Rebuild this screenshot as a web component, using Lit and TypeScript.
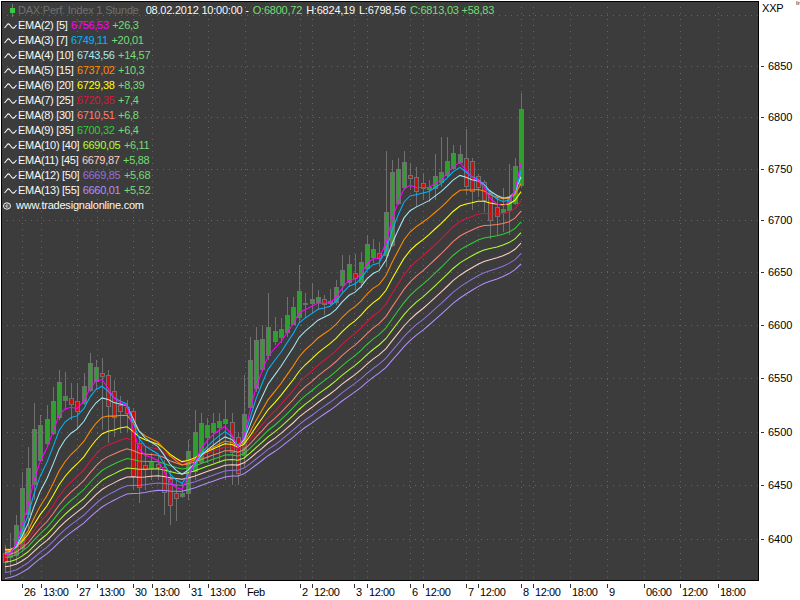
import { LitElement, html, css, svg } from "lit";
import { customElement } from "lit/decorators.js";

type C = [number, number, number, number, number, "g" | "r"];
const candles: C[] = [
  [5,553,562,545,573,"r"],[10,550,557,533,575,"g"],[16,525,555,515,563,"g"],[22,488,548,472,552,"g"],
  [28,468,514,447,530,"g"],[34,429,484,403,500,"g"],[40,425,460,415,462,"g"],[47,419,443,405,447,"g"],
  [53,401,433,387,435,"g"],[59,382,417,370,420,"g"],[65,396,400,372,410,"g"],[71,398,404,383,420,"r"],
  [77,401,411,383,428,"r"],[84,386,403,373,405,"g"],[90,363,390,353,392,"g"],[96,367,381,360,390,"g"],
  [102,373,376,358,430,"r"],[108,375,406,370,443,"r"],[114,391,417,380,437,"r"],[120,405,411,396,433,"r"],
  [127,407,413,400,432,"r"],[133,411,476,408,490,"r"],[139,443,487,437,503,"r"],[145,465,469,447,490,"r"],
  [151,461,468,453,480,"g"],[158,464,467,455,480,"r"],[164,467,492,460,515,"r"],[170,479,505,470,525,"r"],
  [176,493,498,480,521,"r"],[182,493,496,483,498,"g"],[188,451,493,440,500,"g"],[195,432,471,410,480,"g"],
  [201,423,462,413,463,"g"],[207,425,437,418,463,"g"],[213,423,432,413,463,"g"],[219,421,427,413,463,"g"],
  [225,419,423,400,480,"g"],[232,422,452,413,485,"r"],[238,437,473,432,485,"r"],[244,414,455,375,467,"g"],
  [250,360,407,337,410,"g"],[256,340,388,327,392,"g"],[262,339,369,325,372,"g"],[268,327,355,293,360,"g"],
  [275,331,341,317,345,"g"],[281,329,337,318,343,"g"],[287,315,332,297,337,"g"],[293,307,324,297,325,"g"],
  [299,291,317,265,322,"g"],[305,303,304,293,317,"g"],[312,299,303,283,313,"g"],[318,297,302,290,310,"g"],
  [324,299,304,295,315,"r"],[330,301,303,289,305,"g"],[336,287,302,280,305,"g"],[342,270,285,255,292,"g"],
  [349,264,282,255,287,"g"],[355,273,278,254,290,"r"],[361,262,282,252,288,"g"],[367,244,268,235,270,"g"],
  [373,249,257,239,263,"g"],[379,253,258,242,267,"r"],[386,212,255,151,267,"g"],[392,172,245,160,247,"g"],
  [398,169,203,158,205,"g"],[404,162,187,151,190,"g"],[410,175,178,163,190,"r"],[416,177,191,167,207,"r"],
  [423,183,188,173,200,"r"],[429,187,189,180,202,"g"],[435,176,188,154,200,"g"],[441,172,182,137,187,"g"],
  [447,161,175,137,177,"g"],[453,153,168,145,170,"g"],[460,154,162,145,163,"g"],[466,158,186,129,195,"r"],
  [472,161,191,158,210,"r"],[478,176,187,174,197,"r"],[484,182,200,180,212,"r"],[490,193,220,190,239,"r"],
  [497,207,216,195,235,"r"],[503,209,212,188,232,"g"],[509,196,210,164,235,"g"],[515,166,203,158,205,"g"],
  [521,109,185,93,187,"g"],
];

const emas = [
  { name: "EMA(2) [5]", value: "6756,53", delta: "+26,3", period: 5, seed: 552, color: "#ff00ff" },
  { name: "EMA(3) [7]", value: "6749,11", delta: "+20,01", period: 7, seed: 551, color: "#00b4ff" },
  { name: "EMA(4) [10]", value: "6743,56", delta: "+14,57", period: 10, seed: 550, color: "#a8e8f0" },
  { name: "EMA(5) [15]", value: "6737,02", delta: "+10,3", period: 15, seed: 549, color: "#ff8c00" },
  { name: "EMA(6) [20]", value: "6729,38", delta: "+8,39", period: 20, seed: 548, color: "#ffff00" },
  { name: "EMA(7) [25]", value: "6720,35", delta: "+7,4", period: 25, seed: 551, color: "#dc143c" },
  { name: "EMA(8) [30]", value: "6710,51", delta: "+6,8", period: 30, seed: 554, color: "#fa8072" },
  { name: "EMA(9) [35]", value: "6700,32", delta: "+6,4", period: 35, seed: 557, color: "#32cd32" },
  { name: "EMA(10) [40]", value: "6690,05", delta: "+6,11", period: 40, seed: 562, color: "#adff2f" },
  { name: "EMA(11) [45]", value: "6679,87", delta: "+5,88", period: 45, seed: 567, color: "#ffcfc4" },
  { name: "EMA(12) [50]", value: "6669,85", delta: "+5,68", period: 50, seed: 573, color: "#9370db" },
  { name: "EMA(13) [55]", value: "6660,01", delta: "+5,52", period: 55, seed: 579, color: "#b48cff" },
];

const emaPoints = (period: number, seed: number) => {
  const k = 2 / (period + 1);
  let v = seed;
  return candles
    .map((c) => {
      const close = c[5] === "g" ? c[1] : c[2];
      v = v + k * (close - v);
      return `${c[0]},${v.toFixed(1)}`;
    })
    .join(" ");
};

const prices: [string, number][] = [
  ["6850", 66], ["6800", 117], ["6750", 169], ["6700", 220], ["6650", 272],
  ["6600", 325], ["6550", 378], ["6500", 432], ["6450", 485], ["6400", 539],
];
const gridY = [15, ...prices.map((p) => p[1])];
const times: [string, number][] = [
  ["26", 22], ["13:00", 41], ["27", 77], ["13:00", 97], ["30", 133], ["13:00", 152], ["31", 189],
  ["13:00", 208], ["Feb", 245], ["2", 300], ["12:00", 312], ["3", 354], ["12:00", 367], ["6", 410],
  ["12:00", 423], ["7", 466], ["12:00", 478], ["8", 521], ["12:00", 533], ["18:00", 570], ["9", 607],
  ["06:00", 644], ["12:00", 680], ["18:00", 718],
];

@customElement("app-root")
export class AppRoot extends LitElement {
  static styles = css`
    :host {
      display: grid;
      grid-template-columns: 758px 41px;
      grid-template-rows: 580px 19px;
      width: 800px;
      height: 600px;
      box-sizing: border-box;
      padding: 1px 0 0 1px;
      background: #fff;
      overflow: hidden;
      font: 11px/15px "Liberation Sans", Arial, sans-serif;
      color: #000;
    }
    .plot {
      position: relative;
      box-sizing: border-box;
      border: 1px solid #000;
      background: #3c3c3c;
      overflow: hidden;
    }
    .chart { display: block; }
    .legend {
      position: absolute;
      left: 2px;
      top: 1px;
      color: #f8f8f8;
      letter-spacing: -0.22px;
      white-space: nowrap;
    }
    .row { display: flex; align-items: center; height: 15px; gap: 1px; }
    .row > span + span { margin-left: 3px; }
    .ema > span { letter-spacing: -0.3px; }
    .ema > span + span { margin-left: 2.5px; }
    .wave { width: 13px; height: 9px; flex: none; }
    .up { color: #74dc74; }
    .muted { color: #6f6f6f; }
    .head-icon { width: 13px; height: 13px; flex: none; }
    .head .date { margin-left: 6px; }
    .site { gap: 5px; margin-left: -1px; }
    .copy { width: 8px; height: 8px; flex: none; }
    .price-axis { position: relative; }
    .price {
      position: absolute;
      left: 2px;
      transform: translateY(-7px);
      display: flex;
      align-items: center;
      gap: 4px;
    }
    .price::before { content: ""; width: 3px; height: 1px; background: #333; }
    .title {
      position: absolute;
      left: 3px;
      top: 0;
      letter-spacing: -0.2px;
    }
    .corner {
      position: absolute;
      left: 37px;
      top: -1px;
      font-size: 6px;
      line-height: 6px;
    }
    .time-axis { position: relative; grid-column: 1 / 3; }
    .time {
      position: absolute;
      top: 2px;
      padding: 2px 0 0 2px;
      letter-spacing: -0.4px;
    }
    .time::before {
      content: "";
      position: absolute;
      left: 0;
      top: 1px;
      width: 1px;
      height: 4px;
      background: #333;
    }
  `;

  render() {
    return html`
      <div class="plot">
        <svg class="chart" width="756" height="578" viewBox="2 2 756 578">
          ${gridY.map(
            (y) => svg`<line x1="1" x2="758" y1=${y + 0.5} y2=${y + 0.5} stroke="#666" stroke-dasharray="1 5"></line>`
          )}
          ${times.map(
            (t) => svg`<line x1=${t[1] + 0.5} x2=${t[1] + 0.5} y1="1" y2="580" stroke="#666" stroke-dasharray="1 5"></line>`
          )}
          ${candles.map(
            ([x, top, bot, hi, lo, c]) => svg`
              <line x1=${x + 0.5} x2=${x + 0.5} y1=${hi} y2=${lo} stroke="#707070"></line>
              <rect x=${x - 1.5} y=${top + 0.5} width="4" height=${Math.max(bot - top, 1)}
                fill=${c === "g" ? "#2fa02f" : "#cc1010"} stroke="#707070"></rect>`
          )}
          ${emas
            .slice()
            .reverse()
            .map(
              (e) => svg`<polyline points=${emaPoints(e.period, e.seed)} fill="none" stroke=${e.color} stroke-width="1.05"></polyline>`
            )}
        </svg>
        <div class="legend">
          <div class="row head">
            <svg class="head-icon" viewBox="0 0 13 13">
              <path d="M8.5 0v13" stroke="#777"></path>
              <rect x="6" y="4" width="5" height="5" fill="#3cc83c"></rect>
            </svg>
            <span class="muted">DAX Perf. Index 1 Stunde</span>
            <span class="date">08.02.2012 10:00:00 -</span>
            <span class="up">O:6800,72</span>
            <span>H:6824,19</span>
            <span>L:6798,56</span>
            <span class="up">C:6813,03 +58,83</span>
          </div>
          ${emas.map(
            (e) => html`<div class="row ema">
              <svg class="wave" viewBox="0 0 13 9">
                <path d="M0.5 7 L3 4 Q4 2 5.5 3.5 L7.5 6 Q9 8 10.5 6.5 L12.5 4" fill="none" stroke="#f8f8f8" stroke-width="1.1"></path>
              </svg>
              <span>${e.name}</span>
              <span style="color:${e.color}">${e.value}</span>
              <span class="up">${e.delta}</span>
            </div>`
          )}
          <div class="row site">
            <svg class="copy" viewBox="0 0 8 8">
              <ellipse cx="4" cy="4" rx="3.5" ry="3.2" fill="none" stroke="#f8f8f8"></ellipse>
              <path d="M5.5 3H3v2h2.5" fill="none" stroke="#f8f8f8" stroke-width=".8"></path>
            </svg>
            <span>www.tradesignalonline.com</span>
          </div>
        </div>
      </div>
      <div class="price-axis">
        <span class="corner">In</span>
        <span class="title">XXP</span>
        ${prices.map((p) => html`<span class="price" style="top:${p[1] - 1}px">${p[0]}</span>`)}
      </div>
      <div class="time-axis">
        ${times.map((t) => html`<span class="time" style="left:${t[1] - 1}px">${t[0]}</span>`)}
      </div>
    `;
  }
}
